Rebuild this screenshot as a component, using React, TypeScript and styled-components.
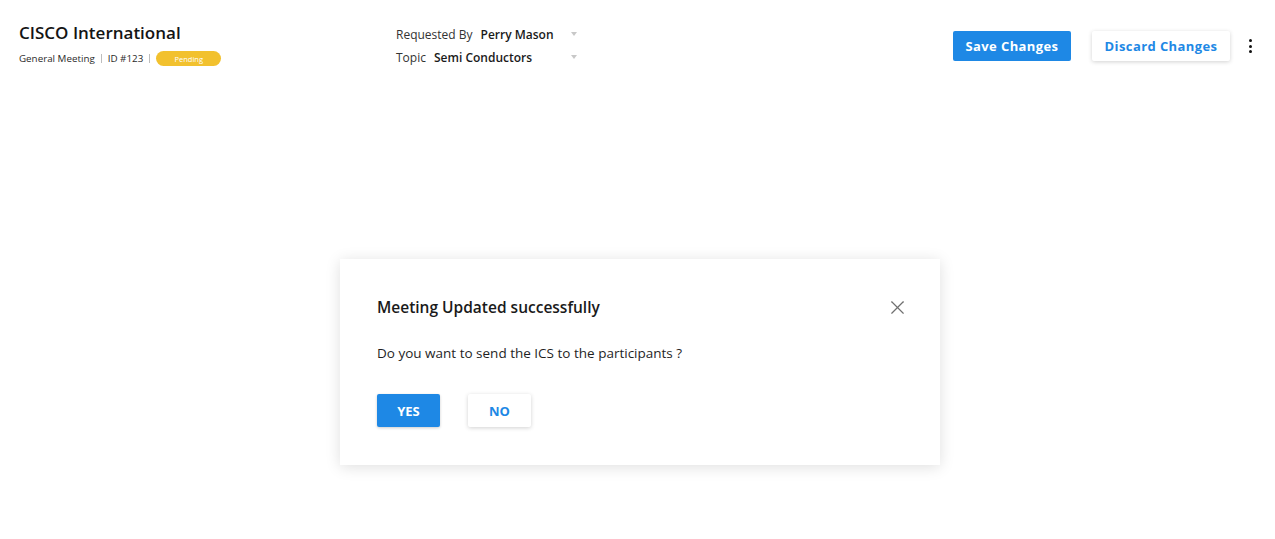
import React from 'react';
import styled, { createGlobalStyle } from 'styled-components';
import { X } from 'lucide-react';

const FONT = '"Open Sans", "Noto Sans", sans-serif';

const GlobalStyle = createGlobalStyle`
  html, body {
    margin: 0;
    padding: 0;
    background: #FFFFFF;
    font-family: ${FONT};
    color: #1F1F1F;
  }
`;

const Page = styled.div`
  width: 1275px;
  height: 539px;
  display: flex;
  flex-direction: column;
`;

const Header = styled.header`
  display: flex;
  align-items: flex-start;
  padding: 23px 23px 0 19px;
`;

const TitleBlock = styled.div`
  width: 377px;
  display: flex;
  flex-direction: column;
  gap: 8px;
`;

const Title = styled.h1`
  margin: 0;
  font-size: 17px;
  font-weight: 600;
  line-height: 20px;
  color: #141414;
`;

const MetaRow = styled.div`
  display: flex;
  align-items: center;
  font-size: 9.8px;
  color: #2A2A2A;
`;

const Divider = styled.span`
  width: 1px;
  height: 9px;
  background: #BDBDBD;
  margin: 0 6px;
`;

const StatusBadge = styled.span`
  display: inline-flex;
  align-items: center;
  justify-content: center;
  width: 65px;
  height: 15px;
  border-radius: 8px;
  background: #F2C12E;
  color: #FFFFFF;
  font-size: 7.5px;
`;

const FieldBlock = styled.div`
  display: flex;
  flex-direction: column;
  gap: 7px;
  padding-top: 3px;
`;

const Field = styled.div`
  display: flex;
  align-items: center;
  width: 181px;
  height: 16px;
  font-size: 12px;
`;

const FieldLabel = styled.span`
  color: #333333;
  margin-right: 8px;
`;

const FieldValue = styled.span`
  font-weight: 600;
  color: #1A1A1A;
  flex: 1;
`;

const Caret = styled.span`
  width: 0;
  height: 0;
  border-left: 3.5px solid transparent;
  border-right: 3.5px solid transparent;
  border-top: 4px solid #C8C8C8;
`;

const Actions = styled.div`
  margin-left: auto;
  display: flex;
  align-items: center;
  gap: 21px;
  padding-top: 8px;
`;

const Button = styled.button<{ $primary?: boolean; $width: number }>`
  width: ${p => p.$width}px;
  height: 30px;
  padding: 0;
  border-radius: 2px;
  border: none;
  font-family: ${FONT};
  font-size: 13px;
  font-weight: 700;
  letter-spacing: 0.4px;
  cursor: pointer;
  background: ${p => (p.$primary ? '#1E88E5' : '#FFFFFF')};
  color: ${p => (p.$primary ? '#FFFFFF' : '#1E88E5')};
  box-shadow: ${p => (p.$primary ? 'none' : '0 1px 4px rgba(0,0,0,0.18)')};
`;

const Kebab = styled.div`
  display: flex;
  flex-direction: column;
  gap: 2.5px;
  margin-left: -2px;
  span {
    width: 3px;
    height: 3px;
    border-radius: 50%;
    background: #111111;
  }
`;

const Body = styled.main`
  flex: 1;
  display: flex;
  justify-content: center;
  padding-top: 193px;
  padding-left: 5px;
`;

const Modal = styled.div`
  width: 600px;
  height: 206px;
  box-sizing: border-box;
  background: #FFFFFF;
  box-shadow: 0 2px 14px rgba(0, 0, 0, 0.13);
  padding: 38px 37px 0 37px;
`;

const ModalHead = styled.div`
  display: flex;
  align-items: center;
  justify-content: space-between;
  height: 20px;
`;

const ModalTitle = styled.h2`
  margin: 0;
  font-size: 15.5px;
  font-weight: 600;
  color: #1A1A1A;
`;

const CloseButton = styled.button`
  border: none;
  background: none;
  padding: 0;
  margin-right: -6px;
  display: flex;
  color: #707070;
  cursor: pointer;
`;

const ModalText = styled.p`
  margin: 27px 0 0;
  font-size: 13.5px;
  line-height: 18px;
  color: #1F1F1F;
`;

const ModalActions = styled.div`
  display: flex;
  gap: 28px;
  margin-top: 32px;
`;

const DialogButton = styled.button<{ $primary?: boolean }>`
  width: 63px;
  height: 33px;
  border: none;
  border-radius: 2px;
  font-family: ${FONT};
  font-size: 13px;
  font-weight: 700;
  cursor: pointer;
  background: ${p => (p.$primary ? '#1E88E5' : '#FFFFFF')};
  color: ${p => (p.$primary ? '#FFFFFF' : '#1E88E5')};
  box-shadow: ${p => (p.$primary ? '0 1px 3px rgba(0,0,0,0.2)' : '0 1px 4px rgba(0,0,0,0.18)')};
`;

const App: React.FC = () => {
  return (
    <Page>
      <GlobalStyle />
      <Header>
        <TitleBlock>
          <Title>CISCO International</Title>
          <MetaRow>
            <span>General Meeting</span>
            <Divider />
            <span>ID #123</span>
            <Divider />
            <StatusBadge>Pending</StatusBadge>
          </MetaRow>
        </TitleBlock>

        <FieldBlock>
          <Field>
            <FieldLabel>Requested By</FieldLabel>
            <FieldValue>Perry Mason</FieldValue>
            <Caret />
          </Field>
          <Field>
            <FieldLabel>Topic</FieldLabel>
            <FieldValue>Semi Conductors</FieldValue>
            <Caret />
          </Field>
        </FieldBlock>

        <Actions>
          <Button $primary $width={118}>Save Changes</Button>
          <Button $width={138}>Discard Changes</Button>
          <Kebab>
            <span />
            <span />
            <span />
          </Kebab>
        </Actions>
      </Header>

      <Body>
        <Modal>
          <ModalHead>
            <ModalTitle>Meeting Updated successfully</ModalTitle>
            <CloseButton>
              <X size={23} strokeWidth={1.2} />
            </CloseButton>
          </ModalHead>
          <ModalText>Do you want to send the ICS to the participants ?</ModalText>
          <ModalActions>
            <DialogButton $primary>YES</DialogButton>
            <DialogButton>NO</DialogButton>
          </ModalActions>
        </Modal>
      </Body>
    </Page>
  );
};

export default App;
